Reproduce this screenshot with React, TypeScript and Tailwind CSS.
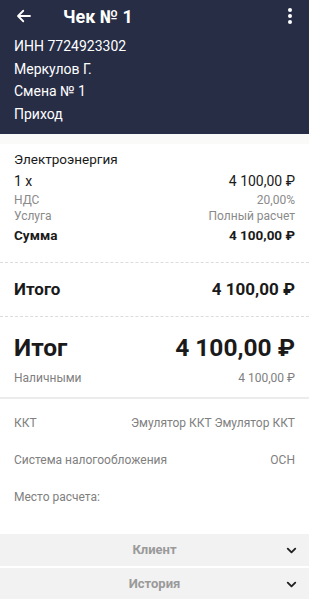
import { ChevronDown } from "lucide-react";

const font = { fontFamily: "Roboto, 'Noto Sans', sans-serif" };

function Row({ left, right, className = "" }: { left: string; right?: string; className?: string }) {
  return (
    <div className={`flex items-center justify-between ${className}`}>
      <span>{left}</span>
      {right && <span>{right}</span>}
    </div>
  );
}

export default function App() {
  return (
    <div className="w-[309px] h-[599px] bg-white overflow-hidden" style={font}>
      <div className="bg-[#262d45] text-white h-[134px] px-[14px]">
        <div className="flex items-center h-[32px]">
          <svg width="18" height="18" viewBox="0 0 24 24" className="ml-[1px]">
            <path d="M20 12H5M11 5l-7 7 7 7" fill="none" stroke="white" strokeWidth="2.4" strokeLinecap="round" strokeLinejoin="round" />
          </svg>
          <span className="ml-[30px] text-[18px] font-bold">Чек № 1</span>
          <span className="ml-auto mr-[3px] flex flex-col gap-[2px]">
            <span className="w-[4px] h-[4px] rounded-full bg-white" />
            <span className="w-[4px] h-[4px] rounded-full bg-white" />
            <span className="w-[4px] h-[4px] rounded-full bg-white" />
          </span>
        </div>
        <div className="text-[14px] leading-[22.5px] pt-[3px]">
          <div>ИНН 7724923302</div>
          <div>Меркулов Г.</div>
          <div>Смена № 1</div>
          <div>Приход</div>
        </div>
      </div>
      <div className="h-[10px] bg-[#fafaf8]" />
      <div className="px-[14px] text-[#1a1a1a]">
        <div className="pt-[4px] pb-[16px]">
          <div className="text-[13.5px] leading-[22px]">Электроэнергия</div>
          <Row left="1 x" right="4 100,00 ₽" className="text-[14px] leading-[22px]" />
          <Row left="НДС" right="20,00%" className="text-[12px] leading-[16px] text-[#8a8a8a]" />
          <Row left="Услуга" right="Полный расчет" className="text-[12px] leading-[16px] text-[#8a8a8a]" />
          <Row left="Сумма" right="4 100,00 ₽" className="text-[13.5px] leading-[22px] font-bold" />
        </div>
      </div>
      <div className="border-t border-dashed border-[#dcdcdc]" />
      <Row left="Итого" right="4 100,00 ₽" className="px-[14px] h-[53px] text-[17px] font-bold text-[#1a1a1a]" />
      <div className="border-t border-dashed border-[#dcdcdc]" />
      <div className="px-[14px] pt-[16px] pb-[10px]">
        <Row left="Итог" right="4 100,00 ₽" className="text-[24.5px] leading-[30px] font-bold text-[#1a1a1a]" />
        <Row left="Наличными" right="4 100,00 ₽" className="mt-[6px] text-[12px] leading-[18px] text-[#808080]" />
      </div>
      <div className="border-t-2 border-[#ececec]" />
      <div className="px-[14px] text-[12px] text-[#808080]">
        <Row left="ККТ" right="Эмулятор ККТ Эмулятор ККТ" className="h-[36px] mt-[6px]" />
        <Row left="Система налогообложения" right="ОСН" className="h-[37px]" />
        <Row left="Место расчета:" className="h-[37px]" />
      </div>
      <div className="mt-[19px] flex flex-col gap-[2px]">
        {["Клиент", "История"].map((t) => (
          <div key={t} className="relative h-[32px] bg-[#f2f2f2] flex items-center justify-center">
            <span className="text-[13px] font-bold text-[#9a9a9a]">{t}</span>
            <ChevronDown className="absolute right-[10px] w-[15px] h-[15px] text-[#222]" strokeWidth={3} />
          </div>
        ))}
      </div>
    </div>
  );
}
